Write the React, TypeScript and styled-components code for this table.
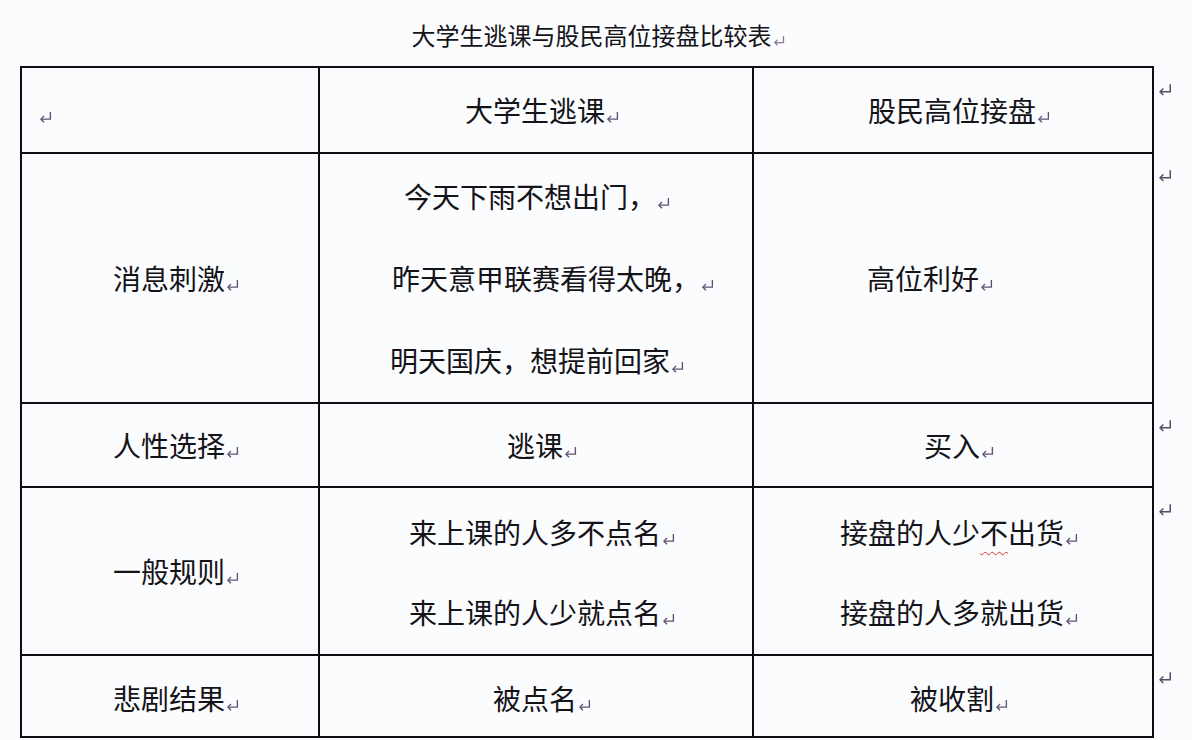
import React from 'react';
import styled, { createGlobalStyle } from 'styled-components';

const GlobalStyle = createGlobalStyle`
  html, body {
    margin: 0;
    padding: 0;
    background: #fbfcfe;
  }
  body {
    font-family: "Noto Sans CJK SC", "Noto Sans", sans-serif;
    color: #141318;
  }
`;

const Page = styled.div`
  width: 1192px;
  height: 740px;
  overflow: hidden;
  background: #fbfcfe;
`;

const Title = styled.div`
  height: 66px;
  line-height: 70px;
  text-align: center;
  font-size: 24px;
  padding-left: 4px;
`;

const Table = styled.table`
  margin-left: 20px;
  border-collapse: collapse;
  table-layout: fixed;
`;

const Col = styled.col<{ $w: number }>`
  width: ${p => p.$w}px;
`;

const Row = styled.tr<{ $h: number }>`
  height: ${p => p.$h}px;
`;

// $dx shifts the centred text sideways (the source doc isn't perfectly centred)
const Cell = styled.td<{ $align?: 'left' | 'center'; $dx?: number; $dy?: number }>`
  border: 2px solid #0e0d16;
  padding: ${p => (p.$dy ?? 0) * 2}px ${p => 4 - Math.min(0, p.$dx ?? 0) * 2}px 0
    ${p => 16 + Math.max(0, p.$dx ?? 0) * 2}px;
  text-align: ${p => p.$align ?? 'center'};
  vertical-align: middle;
  font-size: 28px;
  line-height: 40px;
`;

const Edge = styled.td`
  border: none;
  vertical-align: top;
  padding: 14px 0 0 3px;
  line-height: 14px;
`;

const Line = styled.div<{ $gap: number; $dx?: number }>`
  line-height: ${p => p.$gap}px;
  white-space: nowrap;
  padding-left: ${p => Math.max(0, p.$dx ?? 0) * 2}px;
  padding-right: ${p => -Math.min(0, p.$dx ?? 0) * 2}px;
`;

const Squiggle = styled.span`
  text-decoration: underline wavy #d9342b;
  text-decoration-thickness: 1px;
  text-underline-offset: 7px;
`;

const MarkSvg = styled.svg<{ $size: number }>`
  width: ${p => p.$size}px;
  height: ${p => p.$size}px;
  vertical-align: -2px;
  margin-left: 1px;
`;

const Mark = ({ size = 13, color = '#5e5372' }: { size?: number; color?: string }) => (
  <MarkSvg viewBox="0 0 12 12" $size={size} fill="none" stroke={color} strokeWidth={1.25}>
    <path d="M10.5 1V7.5H1.8" />
    <path d="M4.6 4.7L1.8 7.5L4.6 10.3" />
  </MarkSvg>
);

const rowEnd = (
  <Edge>
    <Mark size={14} color="#564b68" />
  </Edge>
);

export default function App() {
  return (
    <Page>
      <GlobalStyle />
      <Title>
        大学生逃课与股民高位接盘比较表
        <Mark size={12} color="#857c92" />
      </Title>
      <Table>
        <colgroup>
          <Col $w={298} />
          <Col $w={434} />
          <Col $w={400} />
          <Col $w={30} />
        </colgroup>
        <tbody>
          <Row $h={86}>
            <Cell $align="left">
              <Mark />
            </Cell>
            <Cell>
              大学生逃课
              <Mark />
            </Cell>
            <Cell>
              股民高位接盘
              <Mark />
            </Cell>
            {rowEnd}
          </Row>
          <Row $h={250}>
            <Cell>
              消息刺激
              <Mark />
            </Cell>
            <Cell>
              <Line $gap={82} $dx={-5}>
                今天下雨不想出门，
                <Mark />
              </Line>
              <Line $gap={82} $dx={11}>
                昨天意甲联赛看得太晚，
                <Mark />
              </Line>
              <Line $gap={82} $dx={-5}>
                明天国庆，想提前回家
                <Mark />
              </Line>
            </Cell>
            <Cell $dx={-29}>
              高位利好
              <Mark />
            </Cell>
            {rowEnd}
          </Row>
          <Row $h={84}>
            <Cell>
              人性选择
              <Mark />
            </Cell>
            <Cell>
              逃课
              <Mark />
            </Cell>
            <Cell>
              买入
              <Mark />
            </Cell>
            {rowEnd}
          </Row>
          <Row $h={168}>
            <Cell>
              一般规则
              <Mark />
            </Cell>
            <Cell $dy={1}>
              <Line $gap={80}>
                来上课的人多不点名
                <Mark />
              </Line>
              <Line $gap={80}>
                来上课的人少就点名
                <Mark />
              </Line>
            </Cell>
            <Cell $dy={1}>
              <Line $gap={80}>
                接盘的人少<Squiggle>不</Squiggle>出货
                <Mark />
              </Line>
              <Line $gap={80}>
                接盘的人多就出货
                <Mark />
              </Line>
            </Cell>
            {rowEnd}
          </Row>
          <Row $h={82}>
            <Cell $dy={2}>
              悲剧结果
              <Mark />
            </Cell>
            <Cell $dy={2}>
              被点名
              <Mark />
            </Cell>
            <Cell $dy={2}>
              被收割
              <Mark />
            </Cell>
            {rowEnd}
          </Row>
        </tbody>
      </Table>
    </Page>
  );
}
